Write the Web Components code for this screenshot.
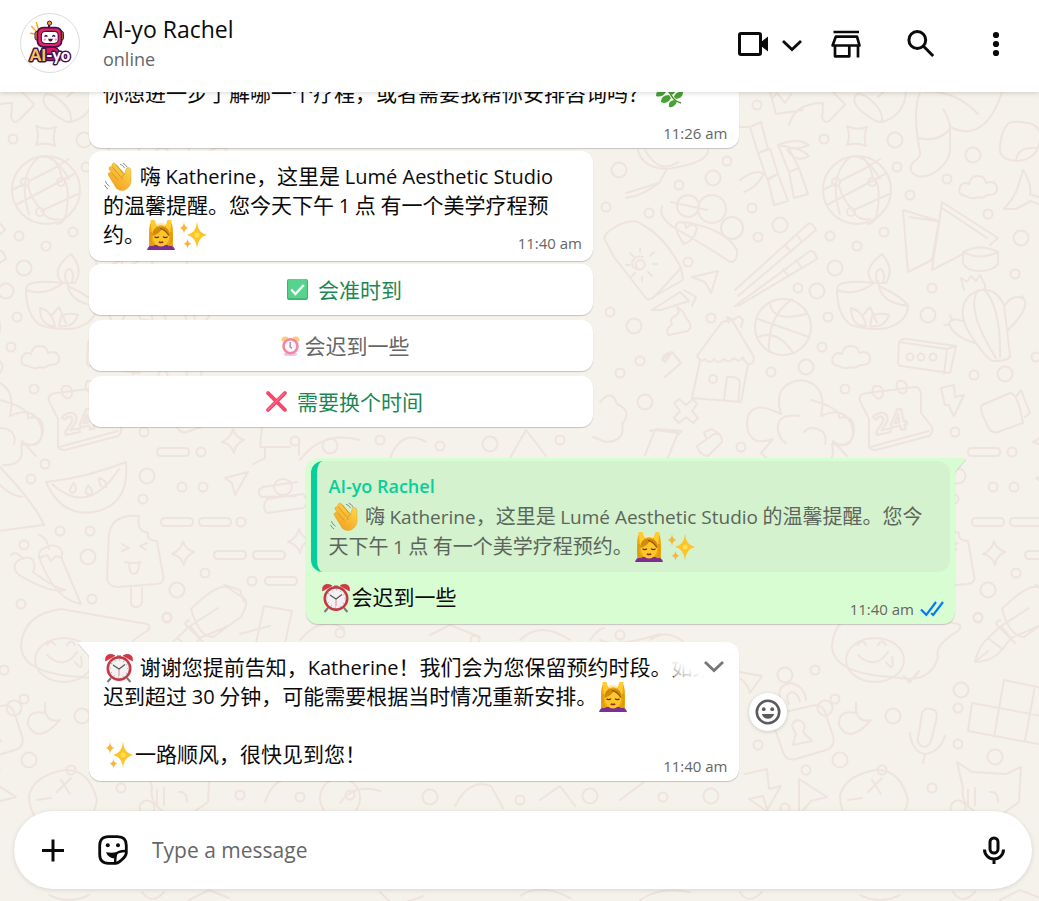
<!DOCTYPE html>
<html lang="zh-Hans">
<head>
<meta charset="utf-8">
<meta name="viewport" content="width=device-width, initial-scale=1">
<title>AI-yo Rachel</title>
<style>
  :root {
    --font-ui: "Open Sans", "Noto Sans", "Noto Sans CJK SC", sans-serif;
    --font-chat: "Noto Sans CJK SC", "Noto Sans", sans-serif;
    --color-text: #0a0a0a;
    --color-muted: #666;
    --color-surface: #fff;
    --color-out: #d9fdd3;
    --color-accent: #06cf9c;
    --color-action: #1b8755;
    --shadow-bubble: 0 1px 1px rgba(11, 20, 26, .2);
    --radius: 12px;
  }

  body {
    margin: 0;
    font-family: var(--font-ui);
    color: var(--color-text);
  }

  /* Latin runs inside Chinese messages */
  [lang="en"] {
    font-family: var(--font-ui);
    font-size: 20px;
    line-height: 1;
  }

  chat-quote [lang="en"] { font-size: 19px; }

  .blank-after { margin: 0 0 28px; }
</style>
</head>
<body>
<chat-app>
  <chat-header slot="header" name="AI-yo Rachel" status="online"></chat-header>

  <chat-bubble time="11:26 am">
    <p class="blank-after">你想进一步了解哪一个疗程，或者需要我帮你安排咨询吗？ <chat-emoji name="herb"></chat-emoji></p>
  </chat-bubble>

  <chat-bubble time="11:40 am" compact>
    <chat-emoji name="wave"></chat-emoji> 嗨 <span lang="en">Katherine</span>，这里是 <span lang="en">Lumé Aesthetic Studio</span> 的温馨提醒。您今天下午 <span lang="en">1</span> 点 有一个美学疗程预约。<chat-emoji name="massage"></chat-emoji><chat-emoji name="sparkles"></chat-emoji>
    <chat-reply slot="replies" icon="check">会准时到</chat-reply>
    <chat-reply slot="replies" icon="alarm" used>会迟到一些</chat-reply>
    <chat-reply slot="replies" icon="cross">需要换个时间</chat-reply>
  </chat-bubble>

  <chat-bubble time="11:40 am" out tail>
    <chat-quote slot="quote" author="AI-yo Rachel"><chat-emoji name="wave"></chat-emoji> 嗨 <span lang="en">Katherine</span>，这里是 <span lang="en">Lumé Aesthetic Studio</span> 的温馨提醒。您今天下午 <span lang="en">1</span> 点 有一个美学疗程预约。<chat-emoji name="massage"></chat-emoji><chat-emoji name="sparkles"></chat-emoji></chat-quote>
    <chat-emoji name="clock"></chat-emoji>会迟到一些
  </chat-bubble>

  <chat-bubble time="11:40 am" tail hovered>
    <chat-emoji name="clock"></chat-emoji> 谢谢您提前告知，<span lang="en">Katherine</span>！我们会为您保留预约时段。如果迟到超过 <span lang="en">30</span> 分钟，可能需要根据当时情况重新安排。<chat-emoji name="massage"></chat-emoji><br><br><chat-emoji name="sparkles"></chat-emoji>一路顺风，很快见到您！
  </chat-bubble>

  <chat-composer slot="footer"></chat-composer>
</chat-app>

<script>
  const ICONS = {
    video: `<svg width="32" height="32" viewBox="0 0 32 32"><rect x="2.5" y="6.5" width="21" height="21" rx="1.5" fill="none" stroke="currentColor" stroke-width="3"/><path d="M24 15l7-5.5v15L24 19z" fill="currentColor"/></svg>`,
    chevron: `<svg width="24" height="24" viewBox="0 0 24 24"><path d="M3 10l9 8.5 9-8.5" fill="none" stroke="currentColor" stroke-width="2.8"/></svg>`,
    store: `<svg width="32" height="32" viewBox="0 0 32 32" fill="none" stroke="currentColor" stroke-width="2.7" stroke-linejoin="round"><path d="M3.500 5H29M5.800 9.600H27L29.500 18.500H2.600zM5 18.500V29.300H19.300V18.500M28 18.500V30.500"/></svg>`,
    search: `<svg width="32" height="32" viewBox="0 0 32 32" fill="none" stroke="currentColor" stroke-width="3"><circle cx="12.300" cy="13" r="8.400"/><path d="M18.500 19.300l9.700 9.700"/></svg>`,
    more: `<svg width="32" height="32" viewBox="0 0 32 32" fill="currentColor"><circle cx="16" cy="8" r="3.100"/><circle cx="16" cy="17" r="3.100"/><circle cx="16" cy="26" r="3.100"/></svg>`,
    plus: `<svg width="30" height="30" viewBox="0 0 30 30"><path d="M15 4.500v22M4 15.500h22" stroke="currentColor" stroke-width="3"/></svg>`,
    sticker: `<svg width="30" height="30" viewBox="0 0 30 30"><path d="M10.500 1.700h9q8.800 0 8.800 8.800v7.500q-.3 3-4.500 6.800-3.600 3.500-6.300 3.500h-7q-8.800 0-8.800-8.800v-9q0-8.800 8.800-8.800z" fill="none" stroke="currentColor" stroke-width="2.800"/><path d="M28 16q-9 .2-10 3.500-.8 3-1 8.800" fill="none" stroke="currentColor" stroke-width="2.400"/><path d="M8 17.300q7 1 11-.4-2 2-2.400 6.500-6.200 0-8.600-6.100z" fill="currentColor"/><circle cx="9.800" cy="10.200" r="2" fill="currentColor"/><circle cx="20" cy="10.200" r="2" fill="currentColor"/></svg>`,
    mic: `<svg width="32" height="32" viewBox="0 0 32 32" fill="none" stroke="currentColor" stroke-width="3"><rect x="12" y="4" width="8" height="15" rx="4"/><path d="M6.500 15.500a9.500 9.500 0 0 0 19 0M16 24.500v5.500"/></svg>`,
    smile: `<svg width="26" height="26" viewBox="0 0 26 26"><circle cx="13" cy="13" r="11.200" fill="none" stroke="currentColor" stroke-width="2.600"/><circle cx="8.800" cy="10.200" r="1.900" fill="currentColor"/><circle cx="17.200" cy="10.200" r="1.900" fill="currentColor"/><path d="M6.800 15h12.400q-1.800 4.800-6.200 4.800T6.800 15z" fill="currentColor"/></svg>`,
    read: `<svg width="24" height="18" viewBox="0 0 24 18" fill="none" stroke="#007bfc" stroke-width="2.200"><path d="M1 9.500l5.300 5.300L16 2M11.200 13.200l2 1.800L23 2"/></svg>`,
  };

  const EMOJI = {
    wave: ['挥手', `<defs><linearGradient id="w" x1="1" y1="0" x2=".3" y2="1"><stop stop-color="#ffdf55"/><stop offset="1" stop-color="#f2a01d"/></linearGradient></defs>
      <path d="M4.500 13.500q-1-2.400 1-3 1.400-.4 2.600 1L5.200 7.600q-.8-2.200 1-3 1.600-.6 2.900 1.200L8 4q-.5-2.200 1.200-2.800 1.600-.4 2.900 1.400l8.600 9.400 1.300-4.200q.6-2.700 2.600-2.300 2.300.4 2.200 3.200l.2 9.800q0 5.300-4.600 8.500-5 3.300-9.900-.6z" fill="url(#w)" stroke="#e39a18" stroke-width=".5"/>
      <path d="M8.100 11.500l6.400 7M9.100 5.800l7.600 9M12.100 2.600l7.200 9.200M20.700 12.200q-3.700 1.800-2.700 5.800" fill="none" stroke="#d08713" stroke-width=".7"/>
      <path d="M16 2.200q3 .8 4.700 4M18.800 1.200q3 1.200 4.300 4M1.300 19q1 3.400 4.200 5.200M.6 23q1 2.700 3.500 4" fill="none" stroke="#8b8b8b" stroke-width="1"/>`],
    massage: ['脸部按摩', `<path d="M3 27V13Q3 4 6 0l4.500 5h9L24 0q3 4 3 13v14z" fill="#eda912"/>
      <path d="M1 30q1-5 8-5h12q7 0 8 5z" fill="#7c2f91"/>
      <path d="M4.500 0h4l2 6.500L6 14zM25.500 0h-4l-2 6.500L24 14z" fill="#ffcb2e"/>
      <ellipse cx="15" cy="16.500" rx="8.300" ry="10" fill="#fbc72c"/>
      <path d="M6.500 16Q5.500 7 15 6.500 24.500 7 23.500 16q-3-5.500-8-6.500-3 4.500-9 6.500z" fill="#d18b09"/>
      <path d="M14 8.500q5 1 9 7" fill="none" stroke="#8f4f08" stroke-width="1.200"/>
      <path d="M8.500 16.800q2.200 1.800 4.500 0M17 16.800q2.300 1.800 4.500 0" fill="none" stroke="#653205" stroke-width="1.200"/>
      <path d="M12.800 22q2.200 1 4.400 0" fill="none" stroke="#9c2a1c" stroke-width="1.600"/>
      <path d="M4 12q-1.500 7 1 14h3Q4 20 6 12zM26 12q1.500 7-1 14h-3q4-6 2-14z" fill="#e09a0b"/>
      <path d="M10.500 5.500q4.500-3 9 0" fill="none" stroke="#ffe9a8" stroke-width="2.500"/>`],
    sparkles: ['闪光', `<g fill="#fdc42a"><path d="M19 1.500q.8 11.500 10 13.500-9.200 2-10 13.500Q18.200 17 9 15q9.200-2 10-13.500z"/><path d="M6 2q.4 5 4.300 6Q6.400 8.900 6 14 5.600 8.900 1.700 8 5.600 7 6 2zM9.500 18.500q.4 4.400 3.800 5.200-3.400.9-3.800 5.200-.4-4.300-3.800-5.200 3.400-.8 3.800-5.200z" fill="#f8b53c"/></g><circle cx="19" cy="15" r="2.500" fill="#ffe14d"/>`],
    clock: ['闹钟', `<path d="M7 25l-3.500 4M23 25l3.500 4" stroke="#77797c" stroke-width="2"/>
      <path d="M1.500 8Q.7 2 6 1.300q3-.3 5 1.500zM28.500 8Q29.300 2 24 1.300q-3-.3-5 1.500z" fill="#dd3445" stroke="#a6242f" stroke-width=".5"/>
      <path d="M13 2h4v3h-4z" fill="#a9a9a9"/>
      <circle cx="15" cy="15.500" r="12.500" fill="#cc3644"/><circle cx="15" cy="15.500" r="10.300" fill="#f3f1f1" stroke="#9e3039" stroke-width=".6"/>
      <circle cx="15" cy="15.500" r="8.700" fill="none" stroke="#999" stroke-width="1.400" stroke-dasharray=".6 3.950"/>
      <path d="M9 12l6 4 6-4.500" fill="none" stroke="#555" stroke-width="1.100"/><path d="M15 16v7" stroke="#d44" stroke-width=".6"/>`],
    herb: ['草药', `<path d="M3 6q10 4 13 10t10 8" fill="none" stroke="#4b8b24" stroke-width="1.500"/><g fill="#46a233"><path d="M8 8Q6 1 12 0q4 4 0 10zM15 14q0-9 8-10 2 6-6 12zM19 18q2-6 9-5 0 6-7 7zM9 11Q1 10 1 17q6 2 10-4zM14 16q-8 0-8 7 6 3 10-4zM19 21q-6 1-5 7 6 1 8-6z"/></g>`],
    check: ['', `<rect width="30" height="30" rx="3" fill="#35b779"/><rect x="1.500" y="0" width="27" height="27.500" rx="2" fill="#57d38b"/><path d="M6 15l6 6.500L24 8.500" fill="none" stroke="#fff" stroke-width="3.300"/>`],
    alarm: ['', `<g opacity=".65"><ellipse cx="15" cy="27.500" rx="10" ry="3" fill="#cbb2e4"/><path d="M2 8q0-6 6-6 3 0 4 2L4 10zM28 8q0-6-6-6-3 0-4 2l8 6z" fill="#f3b536"/><circle cx="15" cy="16" r="10" fill="#f6f0fb" stroke="#f4446a" stroke-width="3.600"/><path d="M14.500 10v7l2.500 2" fill="none" stroke="#4e4659" stroke-width="1.700"/></g>`],
    cross: ['', `<path d="M3 3l24 24M27 3L3 27" stroke="#f8476c" stroke-width="5.500" stroke-linecap="round"/><path d="M3 26.500L26 3.500" stroke="#ff6a8b" stroke-width="1.500" stroke-linecap="round"/>`],
  };

  class ChatEmoji extends HTMLElement {
    connectedCallback() {
      const [label, art] = EMOJI[this.getAttribute('name')];
      this.attachShadow({ mode: 'open' }).innerHTML = `
        <style>
          :host {
            display: inline-block;
            width: var(--emoji-size, 30px);
            height: var(--emoji-size, 30px);
            margin: -4px 1px;
            vertical-align: -4px;
          }
          svg { display: block; width: 100%; height: 100%; }
        </style>
        <svg viewBox="0 0 30 30" role="img" aria-label="${label}">${art}</svg>
      `;
    }
  }

  class ChatAvatar extends HTMLElement {
    connectedCallback() {
      this.attachShadow({ mode: 'open' }).innerHTML = `
        <style>
          :host {
            display: block;
            box-sizing: border-box;
            width: 60px;
            height: 60px;
            border: 1px solid #dcdcdc;
            border-radius: 50%;
            overflow: hidden;
            flex: none;
          }
          svg { display: block; width: 100%; height: 100%; }
          text {
            font: 900 17px Lato, "Open Sans", sans-serif;
            paint-order: stroke;
            stroke: #43104f;
            stroke-width: 3px;
            stroke-linejoin: round;
          }
        </style>
        <svg viewBox="0 0 60 60">
          <path d="M10 20l5 1M11 13l5 5M16 9l2 7" stroke="#f9a825" stroke-width="1.500" stroke-linecap="round"/>
          <path d="M29 9v5" stroke="#43104f" stroke-width="2"/><circle cx="29.500" cy="9.500" r="2.200" fill="#f39a1f" stroke="#43104f"/>
          <rect x="14.500" y="18" width="5" height="9" rx="2" fill="#f39a1f" stroke="#43104f"/><rect x="39" y="18" width="5" height="9" rx="2" fill="#f39a1f" stroke="#43104f"/>
          <path d="M20 48q-2-12 5-14h9q8 2 6 14z" fill="#d81b60" stroke="#43104f" stroke-width="1.500"/>
          <rect x="17" y="14" width="25" height="20" rx="6" fill="#e6245f" stroke="#43104f" stroke-width="1.800"/>
          <rect x="21" y="18" width="17.500" height="12.500" rx="4" fill="#fff" stroke="#43104f" stroke-width="1.200"/>
          <path d="M24.500 23.500q1.200-2.500 2.800 0M32.500 23.500q1.200-2.500 2.800 0" fill="none" stroke="#43104f" stroke-width="1.500"/>
          <path d="M28 25.500h5q-.5 3-2.500 3T28 25.500z" fill="#43104f"/><circle cx="24.500" cy="26.500" r="1.200" fill="#f8a"/><circle cx="36" cy="26.500" r="1.200" fill="#f8a"/>
          <text x="9" y="49" fill="#f6c65b">AI<tspan fill="#fff">-yo</tspan></text>
        </svg>
      `;
    }
  }

  class ChatHeader extends HTMLElement {
    connectedCallback() {
      this.attachShadow({ mode: 'open' }).innerHTML = `
        <style>
          :host {
            display: block;
            position: relative;
            z-index: 1;
            background: var(--color-surface);
            box-shadow: 0 1px 5px rgba(0, 0, 0, .16);
          }
          header {
            display: flex;
            align-items: center;
            padding: 13px 27px 19px 20px;
          }
          .who { flex: 1; min-width: 0; padding-left: 23px; }
          h1 { margin: 0; font-size: 23px; line-height: 32px; font-weight: 400; }
          p { margin: 0; font-size: 18px; line-height: 28px; color: var(--color-muted); }
          .tools { display: flex; gap: 26px; }
          .rest { display: flex; gap: 43px; }
          button {
            display: flex;
            align-items: center;
            gap: 11px;
            padding: 0;
            border: 0;
            background: none;
            color: inherit;
          }
        </style>
        <header>
          <chat-avatar></chat-avatar>
          <div class="who">
            <h1>${this.getAttribute('name')}</h1>
            <p>${this.getAttribute('status')}</p>
          </div>
          <div class="tools">
            <button aria-label="Video call">${ICONS.video}${ICONS.chevron}</button>
            <div class="rest">
              <button aria-label="Catalogue">${ICONS.store}</button>
              <button aria-label="Search">${ICONS.search}</button>
              <button aria-label="Menu">${ICONS.more}</button>
            </div>
          </div>
        </header>
      `;
    }
  }

  class ChatReply extends HTMLElement {
    connectedCallback() {
      this.attachShadow({ mode: 'open' }).innerHTML = `
        <style>
          :host { display: block; --emoji-size: 21px; }
          button {
            display: flex;
            align-items: center;
            justify-content: center;
            gap: 9px;
            width: 100%;
            height: 51px;
            padding: 0 0 0 6px;
            border: 0;
            border-radius: var(--radius);
            background: var(--color-surface);
            box-shadow: var(--shadow-bubble);
            font: 400 21px/29px var(--font-chat);
            color: var(--color-action);
          }
          :host([used]) button { gap: 3px; color: var(--color-muted); }
        </style>
        <button ${this.hasAttribute('used') ? 'aria-disabled="true"' : ''}>
          <chat-emoji name="${this.getAttribute('icon')}"></chat-emoji><span><slot></slot></span>
        </button>
      `;
    }
  }

  class ChatQuote extends HTMLElement {
    connectedCallback() {
      this.attachShadow({ mode: 'open' }).innerHTML = `
        <style>
          :host {
            display: block;
            margin: 3px 5px 0;
            padding: 10px 16px 11px 12px;
            border-left: 6px solid var(--color-accent);
            border-radius: var(--radius);
            background: #d4f2ce;
          }
          strong {
            display: block;
            font: 600 18px/30px var(--font-ui);
            color: var(--color-accent);
          }
          p {
            margin: 0;
            font: 400 20px/30px var(--font-chat);
            color: #5c655b;
          }
        </style>
        <strong>${this.getAttribute('author')}</strong>
        <p><slot></slot></p>
      `;
    }
  }

  class ChatBubble extends HTMLElement {
    connectedCallback() {
      const out = this.hasAttribute('out');
      const hovered = this.hasAttribute('hovered');
      this.attachShadow({ mode: 'open' }).innerHTML = `
        <style>
          :host { display: block; flex: none; --fill: var(--color-surface); }
          :host([out]) { --fill: var(--color-out); margin-top: 28px; }
          :host([hovered]) { margin-top: 15px; }
          .row { display: flex; align-items: center; gap: 10px; }
          :host([out]) .row { justify-content: flex-end; }
          .bubble {
            position: relative;
            box-sizing: border-box;
            width: 75%;
            border-radius: var(--radius);
            background: var(--fill);
            box-shadow: var(--shadow-bubble);
          }
          :host([compact]) .bubble, :host([compact]) .replies { width: 100%; max-width: 504px; }
          :host([tail]:not([out])) .bubble { border-top-left-radius: 0; }
          :host([tail][out]) .bubble { border-top-right-radius: 0; }
          .tail {
            position: absolute;
            top: 0;
            right: 100%;
            width: 11px;
            height: 14px;
            fill: var(--fill);
            filter: drop-shadow(0 1px 0 rgba(11, 20, 26, .16));
          }
          :host([out]) .tail { right: auto; left: 100%; transform: scaleX(-1); }
          :host(:not([tail])) .tail { display: none; }
          .text {
            padding: 10px 18px 0 14px;
            font: 400 21px/29px var(--font-chat);
          }
          .stamp {
            display: flex;
            justify-content: flex-end;
            align-items: center;
            gap: 6px;
            margin-top: -12px;
            padding: 0 11px 5px;
            font-size: 15px;
            line-height: 20px;
            color: var(--color-muted);
          }
          :host([compact]) .stamp { margin-top: -15px; padding-bottom: 8px; }
          .replies { display: grid; gap: 5px; padding-top: 3px; }
          button {
            display: grid;
            place-items: center;
            padding: 0;
            border: 0;
          }
          .menu {
            position: absolute;
            top: 5px;
            right: 3px;
            width: 65px;
            height: 34px;
            padding-left: 22px;
            border-radius: var(--radius);
            background: linear-gradient(30deg, rgba(255, 255, 255, .5), #fff 34%);
            color: #777;
          }
          .react {
            width: 38px;
            height: 38px;
            border-radius: 50%;
            background: var(--color-surface);
            box-shadow: 0 1px 4px rgba(0, 0, 0, .16);
            color: #5b5b5b;
          }
        </style>
        <div class="row">
          <div class="bubble">
            <svg class="tail" viewBox="0 0 11 14"><path d="M11 0H1.500Q-.5 0 .8 2L11 14z"/></svg>
            <slot name="quote"></slot>
            <div class="text"><slot></slot></div>
            <div class="stamp"><time>${this.getAttribute('time')}</time>${out ? ICONS.read : ''}</div>
            ${hovered ? `<button class="menu" aria-label="Message menu">${ICONS.chevron}</button>` : ''}
          </div>
          ${hovered ? `<button class="react" aria-label="React">${ICONS.smile}</button>` : ''}
        </div>
        ${this.hasAttribute('compact') ? '<div class="replies"><slot name="replies"></slot></div>' : ''}
      `;
    }
  }

  class ChatComposer extends HTMLElement {
    connectedCallback() {
      this.attachShadow({ mode: 'open' }).innerHTML = `
        <style>
          :host { display: block; flex: none; position: relative; margin: 30px 7px 12px 14px; }
          form {
            display: flex;
            align-items: center;
            height: 78px;
            padding: 0 22px 0 24px;
            border-radius: 39px;
            background: var(--color-surface);
            box-shadow: 0 1px 5px rgba(0, 0, 0, .12);
          }
          button {
            display: grid;
            padding: 0;
            border: 0;
            background: none;
            color: inherit;
          }
          .sticker { margin: 0 24px 0 30px; }
          input {
            flex: 1;
            min-width: 0;
            padding: 0;
            border: 0;
            outline: 0;
            background: none;
            font: 400 21px/32px var(--font-ui);
            color: inherit;
          }
          input::placeholder { color: var(--color-muted); opacity: 1; }
        </style>
        <form>
          <button type="button" aria-label="Attach">${ICONS.plus}</button>
          <button type="button" class="sticker" aria-label="Stickers">${ICONS.sticker}</button>
          <input type="text" aria-label="Type a message" placeholder="Type a message">
          <button type="button" aria-label="Voice message">${ICONS.mic}</button>
        </form>
      `;
    }
  }

  // Wallpaper doodles. One tile is 811px wide and repeats sideways.
  const DOTS = [
    [757,105],[824,139],[897,167],[947,179],[910,195],[988,214],[1015,274],[752,208],[758,237],[830,236],[857,246],[884,232],[798,288],
    [828,317],[822,347],[771,372],[932,288],[974,375],[845,389],[955,432],[1036,357],[993,487],[1014,487],[1012,452],[1016,573],[1052,522],
    [727,161],[679,185],[649,213],[606,207],[688,262],[711,318],[610,312],[640,361],[620,373],[741,447],[901,531],[954,499],[871,531],[856,464],
    [842,479],[832,604],[903,599],[835,545],[978,617],[815,670],[835,699],[958,708],[958,744],[806,770],[932,788],[882,770],[758,745],[978,618],
    [1063,581],[663,797],[785,808],[475,640],[520,800],[350,795],[340,633],[295,441],[380,440],[440,446],[560,440],[620,635],[240,795],[300,797],
  ];
  const RINGS = [
    [895,140],[973,155],[1021,238],[780,225],[835,268],[817,291],[928,315],[806,367],[1005,374],[619,170],[713,178],[634,326],[645,402],[958,476],
    [988,590],[899,557],[785,675],[893,716],[840,760],[995,757],[961,690],[825,708],[711,796],[330,446],[490,444],[430,797],[590,796],[958,808],
  ];
  const cloud = (x, y) => `M${x - 12} ${y + 8}q-9-1-6-9 3-6 9-3 2-9 9-8 7 0 8 7 9-3 11 4 1 9-10 8-4 4-9 2-6 3-12-1z`;
  const sparkle = (x, y) => `M${x} ${y - 12}q2 8 11 11-9 4-10 13-3-9-12-11 9-4 11-13z`;
  const pill = (x, y) => `M${x - 12} ${y - 4}h24q4 0 4 4t-4 4h-24q-4 0-4-4t4-4z`;
  const DOODLES = [
    // share arrow, tulip, sock
    'M770 92l6 22 27-4M773 98l4-5 8 10 6-9M789 125q6-22 34-22 0 6-1 14 2 7 7 4l15-15q2-2-1-4l-16-16',
    'M857 94q-8 8 8 20t17 6q1-8-8-17-10-10-17-9zM882 122q22-6 24-30M878 97l8-7',
    'M920 92q-8 20 0 60 1 4-4 8-8 6-4 12 6 8 20 2 17-10 18-24V126q-2-10-7-17M918 138q20 5 32-9M950 127q35 17 52-35M925 92q30-2 53 22',
    'M847 126q10 5 20 1-4 9-1 19-9-4-19-1 4-9 0-19z', 'M1008 124q3-4 20-1 14 3 12 16-2 20-22 22-20-1-18-14 1-16 8-23zM1016 160q2-14 22-12',
    // globe
    'M840 214q-12-38 10-57M850 157q15-4 30 22M876 180q5 12 1 34-2 10-9 10M863 158q7 6 10 20M827 205l58-31M840 181l24-12 16-10M852 211l37-17M839 186q4 14 12 22M823 190l12-6M854 213q6 8 16 6',
    // bamboo
    'M750 127l11-5 7 27-10 4zM758 153l12-4 8 25-11 5zM768 180l10-6 10 27-14 4zM778 145l10 2 11 21-10 4zM789 172l10-4 9 26-14 4zM778 145q20-8 31 0-14 6-24 1M787 150q10 14 22 6-8-8-20-8M740 180q16-12 24-6-8 14-20 18M740 127l10 0',
    cloud(978, 188), 'M1023 170q-4 14-7 22-4 8-12 17h12l15-8q9 5 20 3M1023 170q9 14 7 24 10 5 20 3',
    // chopsticks
    'M735 290l73-66q4-2 8 6L738 296M735 306l75-55q4-2 7 8L738 306M785 245l6 7M797 235l5 7M783 269l5 7M796 260l5 7',
    // sandwich and dip
    'M903 210l36 11-7 39-24 12zM903 210l5 62M909 217l28 4M942 202l-10 68 33-17M942 202l56 36-8 7M942 208l45 30',
    'M963 252q17-9 35 0v12q-5 7-18 7-14 0-17-8zM963 252q17 9 35 0',
    // oil lamp
    'M875 283q-38-4-38 6 0 26 14 36 20 6 36 3 20-6 21-22-4-8-29-20l-1-5M837 290q18 7 37-7M879 287q4 16 29 19M882 254q-22 17-8 29h12q9-14-4-29zM877 282q-3-12 4-13 5 4 2 13M851 308q12 3 15 18-15 0-15-18zM863 315l7-8 7 16M889 315q-4 13-19 11l2-10q8-4 17-1z',
    // basketball
    'M758 319l51 18M792 299q-25 18-23 53M770 303q2 20 36 11M758 337q18-8 34 14',
    // cactus
    'M970 334q-15-24 0-39 22-14 34 10l6 50q1 6-17 6-7-2-23-27zM978 290q-13 19 18 68M984 289q17 19 16 68M964 290l-3-12 6 4 4-6 5 5 4-6 5 10 0 6M1005 305q8-12 19-6 6 9-16 31M1024 299l-2-3M963 321q-11-4-14 2 4 14 26 20M952 320l-2-5M949 325l-5 0',
    cloud(851, 358), 'M899 342q3-4 8-3l49 7-6 27-49-7q-3 0-3-4zM899 342l48 7 9-3M947 349l-3 25',
    // cotton tree
    'M781 414q-9-30 20-34 27 4 20 36 26-12 32 14 0 22-20 12M781 414q-32-16-34 8 0 26 26 17M800 416q-24-3-22 14 2 10 8 13M804 432q7-8 19 0 4 5 2 12M773 439l-12 14 10 9h20M833 441l14 15',
    // calendar
    'M867 393q-9 1-7 8l9 18v27q0 4 7 4l53-14q4-2 3-9l-11-14V394q-1-7-6-7zM870 447l59-16M878 386q5 0 5 8-2 6-6 4-7-4-3-12zM902 381q5 0 5 8-2 6-6 4-7-4-3-12z',
    'M941 388l13-3 1 12 9-2-10 21q-4-6-5-11l-4 0zM982 405l28-12q8 0 13 30l-25 9q-9 2-12-10-7-12-4-17zM1016 397l5-7 9 23-5 4',
    // balloon, hand, sunscreen
    'M638 150q4 18 29 19 42-6 41-19M645 150q14 25 33 12M667 169l-8 14q-17 13-33 15M659 183l-33 10M662 206q-4 12 13 22l40 24 15 10q8 0 7-12-10-20-52-28M671 202l36 8M684 244q-14-20-4-22 6 0 6 6 7-7 11 0-2 12-13 16z',
    'M606 242q-4-5 2-10 22-17 35-7 22 12 38 43l-26 28q-6 6-10 1l-31-40zM652 310l28-18 9 9-28 9zM681 268l2 12-30 17M684 290l12 7-4 9M637 268q-4-8 5-8 6 5 0 9-9 2-10-6 2-8 11-6M640 248v4M630 253l4 4M654 252l-4 4M626 265h4M657 264h-4M631 277l4-4M652 276l-4-4M642 281v-4',
    'M692 277l26-6-7 22-6-11zM672 324q-3-5 3-8 6-3 2-9 8 5 9 11 8 8 2 13l-19 4q-5-4 3-11zM662 360l10-8 9 11-16 14M672 352q-14 4-7 10z',
    // hut
    'M697 356l25-34 10-2 22 37q0 8-5 7-5-2-6-7-4 7-9 1-5 6-10 1-5 6-10 0-4 6-9 0-4 4-8-3zM700 361l-8 37 49 4 7-38M724 400l3-23q11-1 13 5l-2 20M709 379a4 4 0 1 0 8 0 4 4 0 1 0-8 0M729 323l-2-6 6 3 6-4 4 4-2 7',
    'M674 403l5-4 7 6 7-6 4 5-5 7 6 7-5 5-7-6-7 6-5-5 6-7zM645 455l10-25 23 3-11 27M650 431l8-2 24 2-4 4M697 446l17-12q8-2 8 8l-14 14q-8 0-11-10zM706 438l-2-6 8-3 6 4M600 402q12-14 17 2 16 7 5 20 4 17-16 18l-13-5',
    // dashes and sparkles
    pill(984, 452), pill(988, 522), pill(1026, 522), pill(1041, 555), pill(1080, 555), pill(1092, 581), sparkle(1044, 441), sparkle(994, 553), sparkle(1110, 541),
    'M1036 478l23-6-13 23-3-12z',
    // scarf and rollers
    'M1073 427l-2 20h30M1076 447v11l-12 6M1110 440v15M1073 488q-6 2-1 9l35-1M1073 487l35-5M1078 513l36-5q8-5 0-14l-36 5q-6 9 0 14M1085 487a9 8 0 1 0 18 0 9 8 0 1 0-18 0',
    // watermelon
    'M857 482q40-4 80-20 4 43-32 50-33 5-48-30zM863 484q36 33 67-15M885 483q-7 8-2 10 7-2 2-10zM899 485q-5 9 2 10 5-3-2-10zM910 478q0 11 7 9 2-6-7-9z',
    // pizza corner
    'M811 467q35 37 44 58l-46 6M811 485q10 10 22 12M811 400q30 8 28 18 16-4 15 14-3 17-22 12 5 22-18 21',
    // chillies
    'M830 560q9-5 14 0 3 8 0 12 22 16 32 18-14 4-46-15-9-9 0-15zM822 555q5-5 12 4M852 550q12-8 19-2 4 5 1 9 16 38 20 47-25-4-40-42-4-7 0-12zM860 549q-2-12-10-14M850 558l8-3 4 6 5-5 6 2',
    // ice pop
    'M950 516q-27-2-30 18l-2 44q1 9 11 9l39-3q8-1 6-9l-6-34q-11-1-9-8-12-2-9-17zM942 588v14q0 5 5 5t6-5v-14M933 544l7 4-7 3M958 543l-7 3 6 4M936 562q10 2 16 0M940 563q0 11 5 11t5-12',
    // chat face
    'M832 646q2-32 40-37l86 15q5 2 0 7-24 14-20 26-7 28-45 20-60-3-61-31zM846 660a29 22 0 1 1 58 0 29 22 0 1 1-58 0',
    // hand and crayon
    'M1002 609q25-25 36-22l18 12q4 4-4 18l-28 20q-14 0-22-28zM1000 620q-7 3-1 7l16 16M1035 585l16 5 4 12M1075 606l28 5-9 42M1075 606l-8 37',
    // fountain pen
    'M975 662q4-17 13-24l14 11q-8 12-27 13zM975 662l13-11M989 637l12-11 10 12-9 12M1001 626l28-18M1011 638l28-12',
    // lock
    'M770 707q-5 4 0 8l12 34q3 13 14 10l30-9q10-3 7-14l-8-24q-4-9-14-6l-35 8zM782 705q-8-19 8-22 14 2 16 17M789 704q-5-10 3-12 7 2 8 10M793 745l3-12q-8-9 1-13 11 2 6 12l9 9z',
    'M740 672l22 4-12 17q-1-7-9-14M856 713q-18-4-17 12 10 20 32-5-16 4-15-17zM858 645q4-7 8 0M878 645q4-7 8 0M858 655q17 16 30-3M886 662q9 12 6-5M904 676l5 6 10-11M910 682l8-9',
    // microphone
    'M922 713q3-6 9-4 8 1 5 12l-5 20q-4 9-11 4-4-3-1-12zM910 733q2 19 15 21 15-2 20-18M925 755l-2 8',
    // board
    'M972 703l70 13M968 731l70 13M972 703l-4 28M1004 680l-10 57M1004 680l38 8M1035 686l-10 54',
    // bottom row
    'M745 774l22-5 2 20 12-3-15 26M768 812l-5-16-14 3zM799 779l28 18-16 4-12 14zM840 796q4-20 35-26 25-2 33 30-3 26-38 27-29 0-30-31zM848 800l14-2M872 780l9 14M882 778l-14 14M957 762l15 10 34 2 15-7-2 35-25 18q-35-10-31-32zM968 790v15M975 788v17M990 792q8-1 8 10',
    'M600 640q15 8 60-6M650 640q20-14 40 8M300 640q20-24 44-12M430 635l20-10 30 12M520 640q20-20 50 0M240 634l30-8M620 800l24-18M590 640q9-12 14-12M455 806q14-28 36-20l12 22M340 803q14-20 40-12M265 802q10-30 38-22M540 800l20-14 15 20M300 460q22-30 60-20M510 458l16-28 20 26M390 458q12-30 36-16',
    'M320 798a20 20 0 1 0 40 0 20 20 0 1 0-40 0M640 900q20-14 50-8M740 892q8 14 22 0M860 895q20 10 40 0M953 892q10 14 22 0M1000 900l20-10 20 8M380 892l14 14 30-10M520 896q20-14 50 2',
  ];

  class ChatWallpaper extends HTMLElement {
    connectedCallback() {
      const dots = DOTS.map(([x, y]) => `<circle cx="${x}" cy="${y}" r="4.500"/>`).join('');
      const rings = RINGS.map(([x, y]) => `<circle cx="${x}" cy="${y}" r="7.500"/>`).join('');
      const boxDots = [910, 921, 933].map(x => `<circle cx="${x}" cy="357" r="3.500"/>`).join('');
      this.attachShadow({ mode: 'open' }).innerHTML = `
        <style>
          :host {
            display: block;
            position: absolute;
            inset: 0;
            overflow: hidden;
            background: #f5f1eb;
          }
          svg {
            display: block;
            width: 100%;
            height: 100%;
            fill: none;
            stroke: #eee4dd;
            stroke-width: 2;
            stroke-linejoin: round;
            stroke-linecap: round;
          }
          text { font: 700 29px "Open Sans", sans-serif; }
        </style>
        <svg aria-hidden="true">
          <g id="tile">
            ${dots}${rings}${boxDots}
            <circle cx="857" cy="190" r="34"/><circle cx="783" cy="327" r="28"/>
            <circle cx="836" cy="182" r="4"/><circle cx="872" cy="182" r="4"/><circle cx="851" cy="212" r="4"/>
            <circle cx="688" cy="206" r="11"/><circle cx="712" cy="209" r="14"/><circle cx="732" cy="228" r="11"/>
            <path d="${DOODLES.join('')}"/>
            <text x="874" y="432" transform="rotate(-12 890 425)">24</text>
          </g>
          <use href="#tile" x="-811"/>
          <use href="#tile" x="811"/>
        </svg>
      `;
    }
  }

  class ChatApp extends HTMLElement {
    connectedCallback() {
      this.attachShadow({ mode: 'open' }).innerHTML = `
        <style>
          :host {
            display: flex;
            flex-direction: column;
            position: relative;
            height: 100vh;
            overflow: hidden;
          }
          main {
            flex: 1;
            min-height: 0;
            display: flex;
            flex-direction: column;
            overflow: hidden;
          }
          .thread {
            position: relative;
            flex: 1;
            min-height: 0;
            display: flex;
            flex-direction: column;
            justify-content: flex-end;
            gap: 3px;
            padding: 0 84px 0 89px;
          }
        </style>
        <chat-wallpaper></chat-wallpaper>
        <slot name="header"></slot>
        <main>
          <div class="thread"><slot></slot></div>
          <slot name="footer"></slot>
        </main>
      `;
    }
  }

  customElements.define('chat-emoji', ChatEmoji);
  customElements.define('chat-avatar', ChatAvatar);
  customElements.define('chat-wallpaper', ChatWallpaper);
  customElements.define('chat-header', ChatHeader);
  customElements.define('chat-reply', ChatReply);
  customElements.define('chat-quote', ChatQuote);
  customElements.define('chat-bubble', ChatBubble);
  customElements.define('chat-composer', ChatComposer);
  customElements.define('chat-app', ChatApp);
</script>
</body>
</html>
